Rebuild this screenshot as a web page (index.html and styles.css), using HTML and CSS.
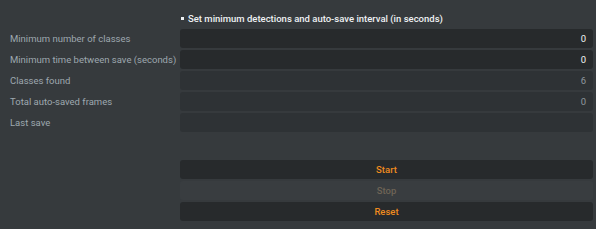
FILE: index.html
```html
<!DOCTYPE html>
<html lang="en">
<head>
    <meta charset="UTF-8">
    <title>Auto-save settings</title>
    <link rel="stylesheet" href="styles.css">
</head>
<body>
    <div class="panel">
        <!-- Section title -->
        <div class="row title-row">
            <div class="label"></div>
            <div class="title"><span class="bullet"></span>Set minimum detections and auto-save interval (in seconds)</div>
        </div>

        <!-- Settings -->
        <div class="row">
            <div class="label">Minimum number of classes</div>
            <div class="field editable">0</div>
        </div>
        <div class="row">
            <div class="label">Minimum time between save (seconds)</div>
            <div class="field editable">0</div>
        </div>
        <div class="row">
            <div class="label">Classes found</div>
            <div class="field readonly">6</div>
        </div>
        <div class="row">
            <div class="label">Total auto-saved frames</div>
            <div class="field readonly">0</div>
        </div>
        <div class="row">
            <div class="label">Last save</div>
            <div class="field readonly"></div>
        </div>

        <!-- Controls -->
        <div class="buttons">
            <button class="button">Start</button>
            <button class="button disabled">Stop</button>
            <button class="button">Reset</button>
        </div>
    </div>
</body>
</html>
```

FILE: styles.css
```css
:root {
    --bg: #363a3d;
    --field-dark: #272a2c;
    --field-read: #2e3235;
    --label: #9ea8af;
    --orange: #ee8a1f;
}

body {
    margin: 0;
    background-color: var(--bg);
    font-family: Roboto, 'Liberation Sans', sans-serif;
    font-size: 9.5px;
}

.panel {
    padding: 9px 3px 0 10px;
}

.row {
    display: flex;
    align-items: center;
    margin-bottom: 2px;
}

.label {
    width: 170px;
    flex-shrink: 0;
    color: var(--label);
    line-height: 19px;
}

.title-row {
    margin-bottom: 1px;
}

.title {
    color: #eef1f3;
    font-weight: 500;
    line-height: 19px;
    padding-left: 1px;
}

.bullet {
    display: inline-block;
    width: 3px;
    height: 3px;
    background-color: #eef1f3;
    margin-right: 4px;
    vertical-align: middle;
    position: relative;
    top: -1px;
}

.field {
    flex: 1;
    height: 19px;
    line-height: 19px;
    border-radius: 3px;
    text-align: right;
    padding-right: 7px;
}

.editable {
    background-color: var(--field-dark);
    color: #f2f4f5;
}

.readonly {
    background-color: var(--field-read);
    color: #8e989f;
}

/* Button stack */
.buttons {
    display: flex;
    flex-direction: column;
    gap: 2px;
    margin-left: 170px;
    margin-top: 28px;
}

.button {
    height: 19px;
    border: none;
    border-radius: 3px;
    background-color: var(--field-dark);
    color: var(--orange);
    font-family: inherit;
    font-size: 9.5px;
    font-weight: 500;
    padding: 0;
}

.button.disabled {
    background-color: #393d40;
    color: #6e6456;
}
```
